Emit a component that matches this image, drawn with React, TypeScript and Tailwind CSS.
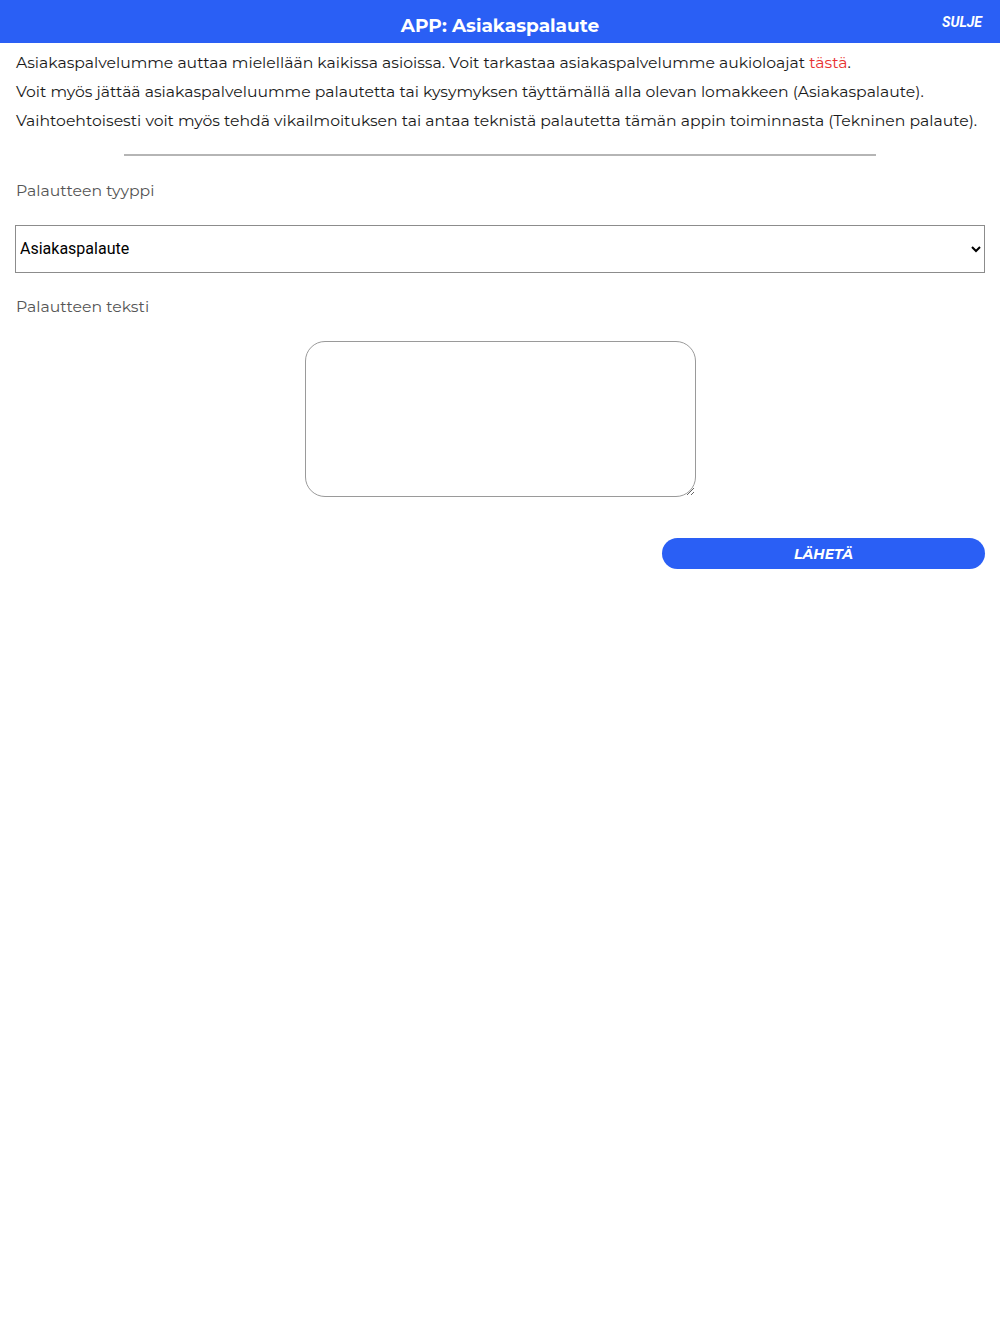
import React from "react";

const App: React.FC = () => {
  return (
    <div className="min-h-[1334px] bg-white font-['Montserrat','Open_Sans',sans-serif]">
      {/* Header */}
      <header className="relative flex h-[43px] items-center justify-center bg-[#2a5ff5]">
        <h1 className="pt-[8px] text-[18.5px] font-bold text-white">APP: Asiakaspalaute</h1>
        <button className="absolute right-[18px] top-[12px] font-['Roboto',sans-serif] text-[14px] font-bold italic text-white">
          SULJE
        </button>
      </header>

      <main className="px-[15px]">
        {/* Intro */}
        <div className="pt-[5px] pl-px text-[15.65px] leading-[29px] text-[#1a1a1a]">
          <p>
            Asiakaspalvelumme auttaa mielellään kaikissa asioissa. Voit tarkastaa asiakaspalvelumme aukioloajat{" "}
            <a className="text-[#e8312f]">tästä</a>.
          </p>
          <p>
            Voit myös jättää asiakaspalveluumme palautetta tai kysymyksen täyttämällä alla olevan lomakkeen (Asiakaspalaute).
          </p>
          <p>
            Vaihtoehtoisesti voit myös tehdä vikailmoituksen tai antaa teknistä palautetta tämän appin toiminnasta (Tekninen palaute).
          </p>
        </div>

        <hr className="mx-auto mt-[19px] w-[752px] border-t-2 border-[#b5b5b5]" />

        {/* Form */}
        <label className="mt-[23px] block pl-px text-[15.7px] text-[#555]">Palautteen tyyppi</label>
        <select className="mt-[22px] h-[48px] w-full border border-[#8c8c8c] px-0 font-['Roboto',sans-serif] text-[16px] text-black">
          <option>Asiakaspalaute</option>
          <option>Tekninen palaute</option>
        </select>

        <label className="mt-[22px] block pl-px text-[15.7px] text-[#555]">Palautteen teksti</label>
        <div className="mt-[23px] flex justify-center">
          <textarea className="h-[156px] w-[391px] rounded-[20px] border border-[#9a9a9a] p-3" />
        </div>

        <div className="mt-[41px] flex justify-end">
          <button className="h-[31px] w-[323px] rounded-full bg-[#2a5ff5] pt-[2px] text-[14px] font-bold italic text-white">
            LÄHETÄ
          </button>
        </div>
      </main>
    </div>
  );
};

export default App;
